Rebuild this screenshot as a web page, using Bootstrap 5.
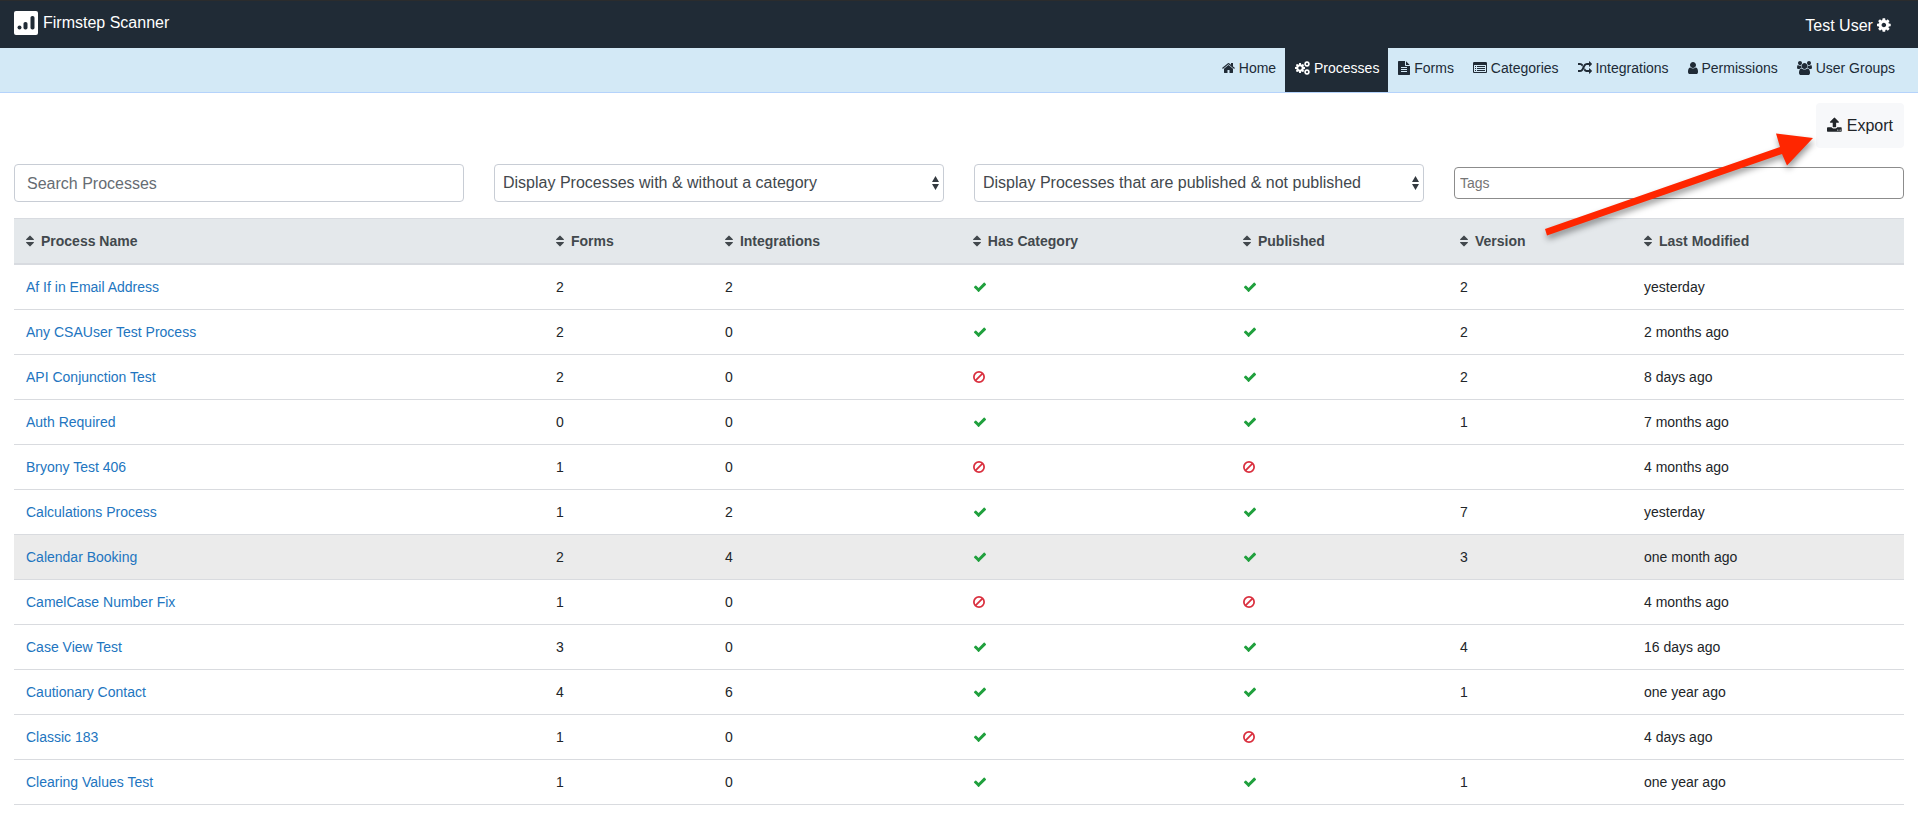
<!DOCTYPE html>
<html lang="en">
<head>
<meta charset="utf-8">
<meta name="viewport" content="width=device-width, initial-scale=1">
<title>Firmstep Scanner</title>
<link href="https://cdn.jsdelivr.net/npm/bootstrap@5.3.0/dist/css/bootstrap.min.css" rel="stylesheet">
<style>
  :root { --ink: #202b36; --sky: #d3e9f6; }
  body { font-family: "Liberation Sans", Arial, sans-serif; font-size: 14px; line-height: 20px; color: #212529; background: #fff; }
  .ico { height: 1em; width: auto; fill: currentColor; vertical-align: -2px; flex: none; }

  .topbar { background: var(--ink); border-top: 1px solid #2b2c2d; font-size: 16px; line-height: 24px; padding: 10px 14px 13px; }
  .topbar a { color: #fff; text-decoration: none; }
  .brand { display: flex; gap: 5px; }
  .brand-mark { width: 24px; height: 24px; }
  .account { padding: 3px 13px 0 0; margin-bottom: -3px; }

  .mainnav { background: var(--sky); border-bottom: 1px solid #b5d3fb; padding: 0 14px; }
  .mainnav .nav-link { color: var(--ink); padding: 10px 9px 14px 10px; }
  .mainnav .nav-link.active { background: var(--ink); color: #fff; }

  .page { padding: 10px 14px 16px; }
  .btn-export { font-size: 16px; line-height: 25px; padding: 10px 11px; border: 0; background: #f7f8fa; color: #212529; border-radius: 4px; }
  .filters { --bs-gutter-x: 30px; }
  .filters .form-control, .filters .form-select { height: 38px; font-size: 16px; border: 1px solid #c8cdd5; border-radius: 4px; color: #42484d; }
  .filters .form-control { padding: 7px 12px 5px; }
  .filters .form-control::placeholder { color: #666c73; opacity: 1; }
  .filters .form-select { padding: 6px 24px 6px 8px; background-position: right 4px center; background-size: 7px 14px;
    background-image: url("data:image/svg+xml,%3Csvg xmlns='http://www.w3.org/2000/svg' viewBox='0 0 7 14'%3E%3Cpath fill='%23343a40' d='M3.5 0L0 6h7zM3.5 14L0 8h7z'/%3E%3C/svg%3E"); }
  .filters .tag-input { height: 32px; font-size: 14px; padding: 5px; border-color: #8c8c8c; }
  .filters .tag-input::placeholder { color: #757575; }

  .processes { table-layout: fixed; border-collapse: separate; border-spacing: 0; --bs-table-hover-bg: #ebebeb; }
  .processes > :not(caption) > * > * { padding: 12px; border: 0 solid #d9dbdf; border-bottom-width: 1px; }
  .processes > thead > tr > th { background: #e4e8eb; color: #42484d; border-width: 1px 0 2px; border-color: #d8dbe0; }
  .processes > tbody > tr.current > td { background: #ebebeb; }
  .processes a { color: #2275c0; text-decoration: none; }
  .processes a:hover { text-decoration: underline; }
  .sorter { display: flex; align-items: center; gap: 7px; padding: 0; border: 0; background: none; color: inherit; font-weight: 700; }
  .yes { color: #20a03d; }
  .no { color: #da303f; }
  .c-name { width: 28.04%; } .c-forms { width: 8.94%; } .c-int { width: 13.12%; } .c-cat { width: 14.29%; }
  .c-pub { width: 11.48%; } .c-ver { width: 9.74%; } .c-mod { width: 14.39%; }

  .pointer { position: absolute; top: 30px; right: 95px; pointer-events: none; filter: drop-shadow(1px 4px 3px rgba(0,0,0,.4)); }
</style>
</head>
<body>
<svg class="d-none" aria-hidden="true">
  <symbol id="home" viewBox="64 0 1664 1792"><path d="M1472 992v480q0 26-19 45t-45 19h-384v-384h-256v384h-384q-26 0-45-19t-19-45v-480q0-1 .5-3t.5-3l575-474 575 474q1 2 1 6zm223-69l-62 74q-8 9-21 11h-3q-13 0-21-7l-692-577-692 577q-12 8-24 7-13-2-21-11l-62-74q-8-10-7-23.5t11-21.5l719-599q32-26 76-26t76 26l244 204v-195q0-14 9-23t23-9h192q14 0 23 9t9 23v408l219 182q10 8 11 21.5t-7 23.5z"/></symbol>
  <symbol id="cog" viewBox="128 0 1536 1792"><path id="gear" d="M1152 896q0-106-75-181t-181-75-181 75-75 181 75 181 181 75 181-75 75-181zm512-109v222q0 12-8 23t-20 13l-185 28q-19 54-39 91 35 50 107 138 10 12 10 25t-9 23q-27 37-99 108t-94 71q-12 0-26-9l-138-108q-44 23-91 38-16 136-29 186-7 28-36 28h-222q-14 0-24.5-8.5t-11.5-21.5l-28-184q-49-16-90-37l-141 107q-10 9-25 9-14 0-25-11-126-114-165-168-7-10-7-23 0-12 8-23 15-21 51-66.5t54-70.5q-27-50-41-99l-183-27q-13-2-21-12.5t-8-23.5v-222q0-12 8-23t19-13l186-28q14-46 39-92-40-57-107-138-10-12-10-24 0-10 9-23 26-36 98.5-107.5t94.5-71.5q13 0 26 10l138 107q44-23 91-38 16-136 29-186 7-28 36-28h222q14 0 24.5 8.5t11.5 21.5l28 184q49 16 90 37l142-107q9-9 24-9 13 0 25 10 129 119 165 170 7 8 7 22 0 12-8 23-15 21-51 66.5t-54 70.5q26 50 41 98l183 28q13 2 21 12.5t8 23.5z"/></symbol>
  <symbol id="cogs" viewBox="0 0 1920 1792"><use href="#gear" transform="translate(-107 149) scale(.8333)"/><use href="#gear" transform="translate(1088 -64) scale(.5)"/><use href="#gear" transform="translate(1088 960) scale(.5)"/></symbol>
  <symbol id="file" viewBox="128 0 1536 1792"><path d="M1596 476q14 14 28 36h-472v-472q22 14 36 28zm-476 164h544v1056q0 40-28 68t-68 28h-1344q-40 0-68-28t-28-68v-1600q0-40 28-68t68-28h800v544q0 40 28 68t68 28zm160 736v-64q0-14-9-23t-23-9h-704q-14 0-23 9t-9 23v64q0 14 9 23t23 9h704q14 0 23-9t9-23zm0-256v-64q0-14-9-23t-23-9h-704q-14 0-23 9t-9 23v64q0 14 9 23t23 9h704q14 0 23-9t9-23zm0-256v-64q0-14-9-23t-23-9h-704q-14 0-23 9t-9 23v64q0 14 9 23t23 9h704q14 0 23-9t9-23z"/></symbol>
  <symbol id="listalt" viewBox="0 0 1792 1792"><path fill-rule="evenodd" d="M160 128h1472q66 0 113 47t47 113v1088q0 66-47 113t-113 47h-1472q-66 0-113-47t-47-113v-1088q0-66 47-113t113-47zm0 384q-32 0-32 32v832q0 32 32 32h1472q32 0 32-32v-832q0-32-32-32zM256 640h128v128h-128zM256 896h128v128h-128zM256 1152h128v128h-128zM512 640h1024v128h-1024zM512 896h1024v128h-1024zM512 1152h1024v128h-1024z"/></symbol>
  <symbol id="random" viewBox="0 0 1792 1792"><path d="M666 481q-60 92-137 273-22-45-37-72.5t-40.5-63.5-51-56.5-63-35-81.5-14.5h-224q-14 0-23-9t-9-23v-192q0-14 9-23t23-9h224q250 0 410 225zm1126 799q0 14-9 23l-320 320q-9 9-23 9-13 0-22.5-9.5t-9.5-22.5v-192q-32 0-85 .5t-81 1-73-1-71-5-64-10.5-63-18.5-58-28.5-59-40-55-53.5-56-69.5q59-93 136-273 22 45 37 72.5t40.5 63.5 51 56.5 63 35 81.5 14.5h256v-192q0-14 9-23t23-9q12 0 24 10l319 319q9 9 9 23zm0-896q0 14-9 23l-320 320q-9 9-23 9-13 0-22.5-9.5t-9.5-22.5v-192h-256q-48 0-87 15t-69 45-51 61.5-45 77.5q-32 62-78 171-29 66-49.5 111t-54 105-64 100-74 83-90 68.5-106.5 42-128 16.5h-224q-14 0-23-9t-9-23v-192q0-14 9-23t23-9h224q48 0 87-15t69-45 51-61.5 45-77.5q32-62 78-171 29-66 49.5-111t54-105 64-100 74-83 90-68.5 106.5-42 128-16.5h256v-192q0-14 9-23t23-9q12 0 24 10l319 319q9 9 9 23z"/></symbol>
  <symbol id="user" viewBox="256 0 1280 1792"><path d="M1536 1399q0 109-62.5 187t-150.5 78h-854q-88 0-150.5-78t-62.5-187q0-85 8.5-160.5t31.5-152 58.5-131 94-89 134.5-34.5q131 128 313 128t313-128q76 0 134.5 34.5t94 89 58.5 131 31.5 152 8.5 160.5zm-256-887q0 159-112.5 271.5t-271.5 112.5-271.5-112.5-112.5-271.5 112.5-271.5 271.5-112.5 271.5 112.5 112.5 271.5z"/></symbol>
  <symbol id="users" viewBox="0 0 1920 1792"><path d="M593 896q-162 5-265 128h-134q-82 0-138-40.5t-56-118.5q0-353 124-353 6 0 43.5 21t97.5 42.5 119 21.5q67 0 133-23-5 37-5 66 0 139 81 256zm1071 637q0 120-73 189.5t-194 69.5h-874q-121 0-194-69.5t-73-189.5q0-53 3.5-103.5t14-109 26.5-108.5 43-97.5 62-81 85.5-53.5 111.5-20q10 0 43 21.5t73 48 107 48 135 21.5 135-21.5 107-48 73-48 43-21.5q61 0 111.5 20t85.5 53.5 62 81 43 97.5 26.5 108.5 14 109 3.5 103.5zm-1024-1277q0 106-75 181t-181 75-181-75-75-181 75-181 181-75 181 75 75 181zm704 384q0 159-112.5 271.5t-271.5 112.5-271.5-112.5-112.5-271.5 112.5-271.5 271.5-112.5 271.5 112.5 112.5 271.5zm576 225q0 78-56 118.5t-138 40.5h-134q-103-123-265-128 81-117 81-256 0-29-5-66 66 23 133 23 59 0 119-21.5t97.5-42.5 43.5-21q124 0 124 353zm-128-609q0 106-75 181t-181 75-181-75-75-181 75-181 181-75 181 75 75 181z"/></symbol>
  <symbol id="upload" viewBox="64 0 1664 1792"><path d="M1344 1472q0-26-19-45t-45-19-45 19-19 45 19 45 45 19 45-19 19-45zm256 0q0-26-19-45t-45-19-45 19-19 45 19 45 45 19 45-19 19-45zm128-224v320q0 40-28 68t-68 28h-1472q-40 0-68-28t-28-68v-320q0-40 28-68t68-28h427q21 56 70.5 92t110.5 36h256q61 0 110.5-36t70.5-92h427q40 0 68 28t28 68zm-325-648q-17 40-59 40h-256v448q0 26-19 45t-45 19h-256q-26 0-45-19t-19-45v-448h-256q-42 0-59-40-17-39 14-69l448-448q18-19 45-19t45 19l448 448q31 30 14 69z"/></symbol>
  <symbol id="sort" viewBox="384 0 1024 1792"><path d="M1408 1088q0 26-19 45l-448 448q-19 19-45 19t-45-19l-448-448q-19-19-19-45t19-45 45-19h896q26 0 45 19t19 45zm0-384q0 26-19 45t-45 19h-896q-26 0-45-19t-19-45 19-45l448-448q19-19 45-19t45 19l448 448q19 19 19 45z"/></symbol>
  <symbol id="check" viewBox="0 0 1792 1792"><path d="M1671 566q0 40-28 68l-724 724-136 136q-28 28-68 28t-68-28l-136-136-362-362q-28-28-28-68t28-68l136-136q28-28 68-28t68 28l294 295 656-657q28-28 68-28t68 28l136 136q28 28 28 68z"/></symbol>
  <symbol id="ban" viewBox="128 0 1536 1792"><g fill="none" stroke="currentColor" stroke-width="224"><circle cx="896" cy="896" r="656"/><path d="M430 1362L1362 430"/></g></symbol>
</svg>

<header class="topbar d-flex justify-content-between align-items-start">
  <a href="#" class="brand">
    <svg class="brand-mark" viewBox="0 0 24 24" aria-hidden="true"><rect width="24" height="24" rx="2" fill="#fff"/><g fill="#202b36"><circle cx="5.500" cy="16.500" r="2"/><rect x="9.500" y="11" width="4" height="7.500" rx="1.800"/><rect x="16.500" y="5" width="4" height="13.500" rx="1.800"/></g></svg>
    <span>Firmstep Scanner</span>
  </a>
  <a href="#" class="account">Test User <svg class="ico" viewBox="128 0 1536 1792"><use href="#gear"/></svg></a>
</header>

<nav class="mainnav nav justify-content-end" aria-label="Main">
  <a class="nav-link" href="#"><svg class="ico" viewBox="0 0 1664 1792"><use href="#home" width="1664" height="1792"/></svg> Home</a>
  <a class="nav-link active" aria-current="page" href="#"><svg class="ico" viewBox="0 0 1920 1792"><use href="#cogs" width="1920" height="1792"/></svg> Processes</a>
  <a class="nav-link" href="#"><svg class="ico" viewBox="0 0 1536 1792"><use href="#file" width="1536" height="1792"/></svg> Forms</a>
  <a class="nav-link" href="#"><svg class="ico" viewBox="0 0 1792 1792"><use href="#listalt" width="1792" height="1792"/></svg> Categories</a>
  <a class="nav-link" href="#"><svg class="ico" viewBox="0 0 1792 1792"><use href="#random" width="1792" height="1792"/></svg> Integrations</a>
  <a class="nav-link" href="#"><svg class="ico" viewBox="0 0 1280 1792"><use href="#user" width="1280" height="1792"/></svg> Permissions</a>
  <a class="nav-link" href="#"><svg class="ico" viewBox="0 0 1920 1792"><use href="#users" width="1920" height="1792"/></svg> User Groups</a>
</nav>

<main class="page position-relative">
  <div class="d-flex justify-content-end mb-3">
    <button type="button" class="btn btn-export"><svg class="ico" viewBox="0 0 1664 1792"><use href="#upload" width="1664" height="1792"/></svg> Export</button>
  </div>

  <form class="filters row align-items-center mb-3">
    <div class="col-3"><input type="text" class="form-control" placeholder="Search Processes" aria-label="Search Processes"></div>
    <div class="col-3"><select class="form-select" aria-label="Category filter"><option>Display Processes with &amp; without a category</option></select></div>
    <div class="col-3"><select class="form-select" aria-label="Published filter"><option>Display Processes that are published &amp; not published</option></select></div>
    <div class="col-3"><input type="text" class="form-control tag-input" placeholder="Tags" aria-label="Tags"></div>
  </form>

  <table class="processes table table-hover mb-0">
    <thead>
      <tr>
        <th class="c-name" scope="col"><button type="button" class="sorter"><svg class="ico" viewBox="0 0 1024 1792"><use href="#sort" width="1024" height="1792"/></svg>Process Name</button></th>
        <th class="c-forms" scope="col"><button type="button" class="sorter"><svg class="ico" viewBox="0 0 1024 1792"><use href="#sort" width="1024" height="1792"/></svg>Forms</button></th>
        <th class="c-int" scope="col"><button type="button" class="sorter"><svg class="ico" viewBox="0 0 1024 1792"><use href="#sort" width="1024" height="1792"/></svg>Integrations</button></th>
        <th class="c-cat" scope="col"><button type="button" class="sorter"><svg class="ico" viewBox="0 0 1024 1792"><use href="#sort" width="1024" height="1792"/></svg>Has Category</button></th>
        <th class="c-pub" scope="col"><button type="button" class="sorter"><svg class="ico" viewBox="0 0 1024 1792"><use href="#sort" width="1024" height="1792"/></svg>Published</button></th>
        <th class="c-ver" scope="col"><button type="button" class="sorter"><svg class="ico" viewBox="0 0 1024 1792"><use href="#sort" width="1024" height="1792"/></svg>Version</button></th>
        <th class="c-mod" scope="col"><button type="button" class="sorter"><svg class="ico" viewBox="0 0 1024 1792"><use href="#sort" width="1024" height="1792"/></svg>Last Modified</button></th>
      </tr>
    </thead>
    <tbody>
      <tr><td><a href="#">Af If in Email Address</a></td><td>2</td><td>2</td><td><svg class="ico yes" viewBox="0 0 1792 1792"><use href="#check"/></svg></td><td><svg class="ico yes" viewBox="0 0 1792 1792"><use href="#check"/></svg></td><td>2</td><td>yesterday</td></tr>
      <tr><td><a href="#">Any CSAUser Test Process</a></td><td>2</td><td>0</td><td><svg class="ico yes" viewBox="0 0 1792 1792"><use href="#check"/></svg></td><td><svg class="ico yes" viewBox="0 0 1792 1792"><use href="#check"/></svg></td><td>2</td><td>2 months ago</td></tr>
      <tr><td><a href="#">API Conjunction Test</a></td><td>2</td><td>0</td><td><svg class="ico no" viewBox="0 0 1536 1792"><use href="#ban" width="1536" height="1792"/></svg></td><td><svg class="ico yes" viewBox="0 0 1792 1792"><use href="#check"/></svg></td><td>2</td><td>8 days ago</td></tr>
      <tr><td><a href="#">Auth Required</a></td><td>0</td><td>0</td><td><svg class="ico yes" viewBox="0 0 1792 1792"><use href="#check"/></svg></td><td><svg class="ico yes" viewBox="0 0 1792 1792"><use href="#check"/></svg></td><td>1</td><td>7 months ago</td></tr>
      <tr><td><a href="#">Bryony Test 406</a></td><td>1</td><td>0</td><td><svg class="ico no" viewBox="0 0 1536 1792"><use href="#ban" width="1536" height="1792"/></svg></td><td><svg class="ico no" viewBox="0 0 1536 1792"><use href="#ban" width="1536" height="1792"/></svg></td><td></td><td>4 months ago</td></tr>
      <tr><td><a href="#">Calculations Process</a></td><td>1</td><td>2</td><td><svg class="ico yes" viewBox="0 0 1792 1792"><use href="#check"/></svg></td><td><svg class="ico yes" viewBox="0 0 1792 1792"><use href="#check"/></svg></td><td>7</td><td>yesterday</td></tr>
      <tr class="current"><td><a href="#">Calendar Booking</a></td><td>2</td><td>4</td><td><svg class="ico yes" viewBox="0 0 1792 1792"><use href="#check"/></svg></td><td><svg class="ico yes" viewBox="0 0 1792 1792"><use href="#check"/></svg></td><td>3</td><td>one month ago</td></tr>
      <tr><td><a href="#">CamelCase Number Fix</a></td><td>1</td><td>0</td><td><svg class="ico no" viewBox="0 0 1536 1792"><use href="#ban" width="1536" height="1792"/></svg></td><td><svg class="ico no" viewBox="0 0 1536 1792"><use href="#ban" width="1536" height="1792"/></svg></td><td></td><td>4 months ago</td></tr>
      <tr><td><a href="#">Case View Test</a></td><td>3</td><td>0</td><td><svg class="ico yes" viewBox="0 0 1792 1792"><use href="#check"/></svg></td><td><svg class="ico yes" viewBox="0 0 1792 1792"><use href="#check"/></svg></td><td>4</td><td>16 days ago</td></tr>
      <tr><td><a href="#">Cautionary Contact</a></td><td>4</td><td>6</td><td><svg class="ico yes" viewBox="0 0 1792 1792"><use href="#check"/></svg></td><td><svg class="ico yes" viewBox="0 0 1792 1792"><use href="#check"/></svg></td><td>1</td><td>one year ago</td></tr>
      <tr><td><a href="#">Classic 183</a></td><td>1</td><td>0</td><td><svg class="ico yes" viewBox="0 0 1792 1792"><use href="#check"/></svg></td><td><svg class="ico no" viewBox="0 0 1536 1792"><use href="#ban" width="1536" height="1792"/></svg></td><td></td><td>4 days ago</td></tr>
      <tr><td><a href="#">Clearing Values Test</a></td><td>1</td><td>0</td><td><svg class="ico yes" viewBox="0 0 1792 1792"><use href="#check"/></svg></td><td><svg class="ico yes" viewBox="0 0 1792 1792"><use href="#check"/></svg></td><td>1</td><td>one year ago</td></tr>
    </tbody>
  </table>

  <!-- Callout arrow pointing at the Export button -->
  <svg class="pointer" width="288" height="125" viewBox="0 0 288 125" aria-hidden="true"><path fill="#ff2600" d="M10 106L245 24L241 10.500L278 15L252 42.500L247 31L12 112.500z"/></svg>
</main>
<script src="https://cdn.jsdelivr.net/npm/bootstrap@5.3.0/dist/js/bootstrap.bundle.min.js"></script>
</body>
</html>
